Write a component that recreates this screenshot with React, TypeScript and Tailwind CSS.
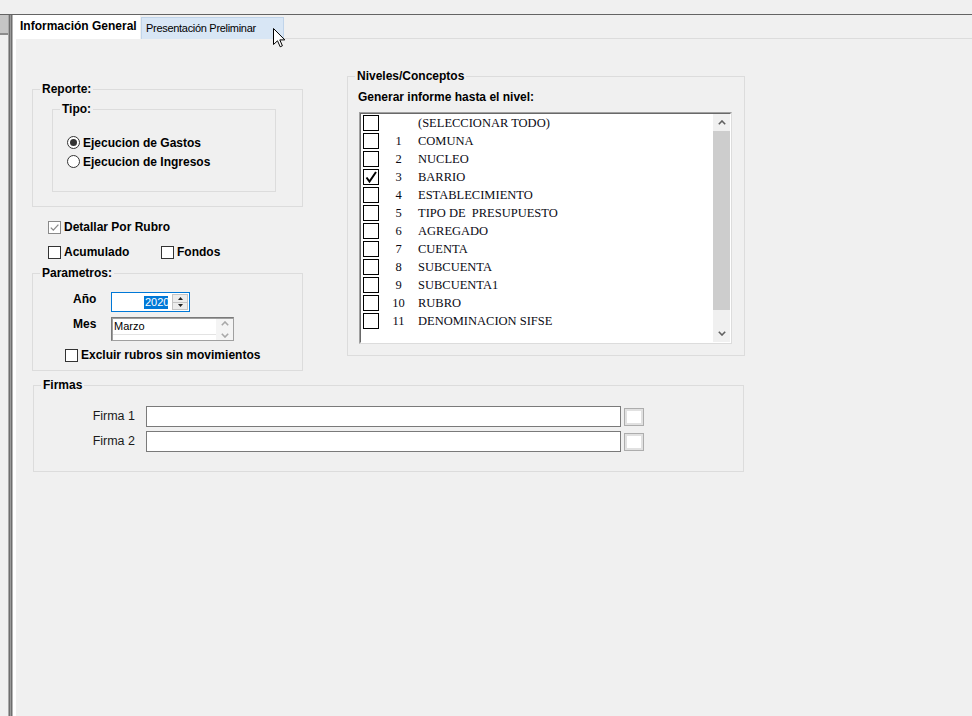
import React from 'react';

const SANS = "font-['Liberation_Sans',Arial,sans-serif]";

function Chevron({ down = false, color = '#606060' }: { down?: boolean; color?: string }) {
  return (
    <svg width="8" height="5" viewBox="0 0 8 5">
      <path
        d={down ? 'M0.8 0.8 L4 4 L7.2 0.8' : 'M0.8 4.2 L4 1 L7.2 4.2'}
        fill="none"
        stroke={color}
        strokeWidth="1.6"
      />
    </svg>
  );
}

function CheckBox({ checked = false, muted = false }: { checked?: boolean; muted?: boolean }) {
  return (
    <span
      className={`flex h-[13px] w-[13px] shrink-0 items-center justify-center border bg-white ${
        muted ? 'border-[#8a8a8a]' : 'border-[#333333]'
      }`}
    >
      {checked && (
        <svg width="11" height="11" viewBox="0 0 11 11">
          <path d="M1.8 5.6 L4.3 8.1 L9.4 2.6" fill="none" stroke={muted ? '#8a8a8a' : '#333'} strokeWidth="1.3" />
        </svg>
      )}
    </span>
  );
}

function Radio({ checked = false }: { checked?: boolean }) {
  return (
    <span className="flex h-[13px] w-[13px] shrink-0 items-center justify-center rounded-full border border-[#333333] bg-white">
      {checked && <span className="h-[7px] w-[7px] rounded-full bg-[#333333]" />}
    </span>
  );
}

function Legend({ children }: { children: React.ReactNode }) {
  return (
    <div className="-mt-[8px] ml-[7px] w-fit bg-[#f0f0f0] px-[2px] text-[12px] font-bold leading-[14px]">
      {children}
    </div>
  );
}

const levels: { n: string; label: string; checked?: boolean }[] = [
  { n: '', label: '(SELECCIONAR TODO)' },
  { n: '1', label: 'COMUNA' },
  { n: '2', label: 'NUCLEO' },
  { n: '3', label: 'BARRIO', checked: true },
  { n: '4', label: 'ESTABLECIMIENTO' },
  { n: '5', label: 'TIPO DE  PRESUPUESTO' },
  { n: '6', label: 'AGREGADO' },
  { n: '7', label: 'CUENTA' },
  { n: '8', label: 'SUBCUENTA' },
  { n: '9', label: 'SUBCUENTA1' },
  { n: '10', label: 'RUBRO' },
  { n: '11', label: 'DENOMINACION SIFSE' },
];

function FirmaRow({ label, className = '' }: { label: string; className?: string }) {
  return (
    <div className={`flex items-center ${className}`}>
      <div className="w-[101px] text-right text-[12.5px] text-[#1a1a1a]">{label}</div>
      <div className="ml-[11px] h-[21px] w-[475px] border border-[#7a7a7a] bg-white" />
      <div className="ml-[3px] flex h-[18px] w-[20px] items-center justify-center border border-[#adadad] bg-[#e1e1e1]">
        <div className="h-[12px] w-[14px] bg-white" />
      </div>
    </div>
  );
}

export default function App() {
  return (
    <div className={`relative h-[716px] w-[972px] overflow-hidden bg-[#f0f0f0] text-black ${SANS}`}>
      <div className="h-[14px]" />
      <div className="h-px bg-[#646464]" />
      <div className="flex h-[701px]">
        <div className="flex w-[8px] flex-col">
          <div className="h-[18px] bg-[#c6c6c6]" />
          <div className="h-[2px] bg-[#8c8c8c]" />
        </div>
        <div className="flex w-[5px]">
          <div className="w-px bg-[#a8a8a8]" />
          <div className="w-px bg-[#6e6e6e]" />
          <div className="w-px bg-[#9a9a9a]" />
          <div className="w-px bg-[#6e6e6e]" />
          <div className="w-px bg-[#b4b4b4]" />
        </div>
        <div className="flex flex-1 flex-col border-l-[3px] border-white">
          {/* tab strip */}
          <div className="flex h-[24px] items-end">
            <div className="flex h-[24px] w-[124px] items-center bg-white pb-[2px] pl-[4px] text-[12px] font-bold">
              Información General
            </div>
            <div className="ml-px flex h-[22px] w-[143px] items-center border border-b-0 border-[#c0d4ea] bg-[#d8e6f5] pl-[4px] text-[11px] tracking-[-0.3px]">
              Presentación Preliminar
            </div>
            <div className="h-full flex-1 border-b border-[#dcdcdc]" />
          </div>

          {/* panel */}
          <div className="flex-1 pl-[16px] pt-[37px]">
            <div className="flex items-start">
              {/* left column */}
              <div className="mt-[13px] flex w-[271px] flex-col">
                <div className="h-[118px] border border-[#dcdcdc]">
                  <Legend>Reporte:</Legend>
                  <div className="ml-[19px] mt-[13px] h-[83px] w-[224px] border border-[#dcdcdc]">
                    <Legend>Tipo:</Legend>
                    <div className="mt-[17px] flex flex-col pl-[14px] text-[12px] font-bold">
                      <div className="flex h-[19px] items-center gap-[3px]">
                        <Radio checked />
                        <span>Ejecucion de Gastos</span>
                      </div>
                      <div className="flex h-[19px] items-center gap-[3px]">
                        <Radio />
                        <span>Ejecucion de Ingresos</span>
                      </div>
                    </div>
                  </div>
                </div>

                <div className="mt-[10px] flex h-[20px] items-center gap-[3px] pl-[16px] text-[12px] font-bold">
                  <CheckBox checked muted />
                  <span>Detallar Por Rubro</span>
                </div>
                <div className="mt-[5px] flex h-[20px] items-center pl-[16px] text-[12px] font-bold">
                  <div className="flex w-[113px] items-center gap-[3px]">
                    <CheckBox />
                    <span>Acumulado</span>
                  </div>
                  <div className="flex items-center gap-[3px]">
                    <CheckBox />
                    <span>Fondos</span>
                  </div>
                </div>

                <div className="mt-[11px] h-[98px] border border-[#dcdcdc]">
                  <Legend>Parametros:</Legend>
                  <div className="mt-[12px] flex items-start pl-[40px]">
                    <div className="w-[38px] text-[12px] font-bold leading-[14px]">Año</div>
                    <div className="flex h-[20px] w-[79px] items-center justify-end border border-[#0078d7] bg-white pr-px">
                      <div className="h-[13px] w-[24px] overflow-hidden bg-[#0078d7] pl-px text-[11px] leading-[13px] text-white">
                        2020
                      </div>
                      <div className="ml-[4px] flex h-[16px] w-[16px] flex-col border border-[#c4c4c4] bg-[#ececec]">
                        <div className="flex flex-1 items-center justify-center">
                          <svg width="5" height="3" viewBox="0 0 5 3">
                            <path d="M0 3 L2.5 0 L5 3 Z" fill="#222" />
                          </svg>
                        </div>
                        <div className="flex flex-1 items-center justify-center border-t border-[#c4c4c4]">
                          <svg width="5" height="3" viewBox="0 0 5 3">
                            <path d="M0 0 L2.5 3 L5 0 Z" fill="#222" />
                          </svg>
                        </div>
                      </div>
                    </div>
                  </div>
                  <div className="mt-[5px] flex items-start pl-[40px]">
                    <div className="w-[38px] text-[12px] font-bold leading-[14px]">Mes</div>
                    <div className="h-[24px] w-[123px] border border-[#7a7a7a] border-r-[#a0a0a0] border-b-[#a0a0a0]">
                      <div className="flex h-full border-l border-t border-[#a0a0a0] border-r-white border-b-white bg-white">
                        <div className="flex flex-1 flex-col">
                          <div className="flex h-[15px] items-center pl-px text-[11px]">Marzo</div>
                          <div className="h-px bg-[#e3e3e3]" />
                        </div>
                        <div className="flex w-[17px] flex-col items-center justify-between bg-[#f4f4f4] py-[2px]">
                          <Chevron color="#a8a8a8" />
                          <Chevron down color="#a8a8a8" />
                        </div>
                      </div>
                    </div>
                  </div>
                  <div className="mt-[4px] flex h-[20px] items-center gap-[3px] pl-[32px] text-[12px] font-bold">
                    <CheckBox />
                    <span>Excluir rubros sin movimientos</span>
                  </div>
                </div>
              </div>

              {/* right column */}
              <div className="ml-[44px] h-[280px] w-[398px] border border-[#dcdcdc]">
                <Legend>Niveles/Conceptos</Legend>
                <div className="mt-[7px] pl-[10px] text-[12px] font-bold leading-[14px]">
                  Generar informe hasta el nivel:
                </div>
                <div className="ml-[11px] mt-[8px] h-[232px] w-[373px] border border-[#a0a0a0] border-r-[#dcdcdc] border-b-[#dcdcdc]">
                  <div className="flex h-full border border-[#696969] border-r-white border-b-white bg-white">
                    <div className="flex flex-1 flex-col pl-[2px] font-['Liberation_Serif','Times_New_Roman',serif] text-[12.5px] text-[#0a0a14]">
                      {levels.map((l, i) => (
                        <div key={i} className="flex h-[18px] shrink-0 items-center">
                          <span className="flex h-[16px] w-[16px] shrink-0 items-center justify-center border border-black bg-white">
                            {l.checked && (
                              <svg width="14" height="14" viewBox="0 0 14 14">
                                <path d="M2.5 7.5 L5.5 11.5 L12 2" fill="none" stroke="#000" strokeWidth="2" />
                              </svg>
                            )}
                          </span>
                          <span className="w-[39px] text-center">{l.n}</span>
                          <span className="whitespace-pre">{l.label}</span>
                        </div>
                      ))}
                    </div>
                    <div className="flex w-[17px] flex-col bg-[#f0f0f0]">
                      <div className="flex h-[17px] items-center justify-center">
                        <Chevron />
                      </div>
                      <div className="h-[179px] bg-[#cdcdcd]" />
                      <div className="flex-1" />
                      <div className="flex h-[17px] items-center justify-center">
                        <Chevron down />
                      </div>
                    </div>
                  </div>
                </div>
              </div>
            </div>

            {/* Firmas */}
            <div className="ml-px mt-[14px] h-[87px] w-[711px] border border-[#dcdcdc]">
              <Legend>Firmas</Legend>
              <FirmaRow label="Firma 1" className="mt-[14px]" />
              <FirmaRow label="Firma 2" className="mt-[4px]" />
            </div>
          </div>
        </div>
      </div>

      {/* mouse pointer */}
      <svg className="absolute left-[273px] top-[28px]" width="13" height="20" viewBox="0 0 13 20">
        <path
          d="M0.5 0.5 V16.5 L4.5 12.8 L7.2 18.8 L9.4 17.8 L6.8 11.9 H11.8 Z"
          fill="#fff"
          stroke="#000"
          strokeWidth="1"
          strokeLinejoin="miter"
        />
      </svg>
    </div>
  );
}
